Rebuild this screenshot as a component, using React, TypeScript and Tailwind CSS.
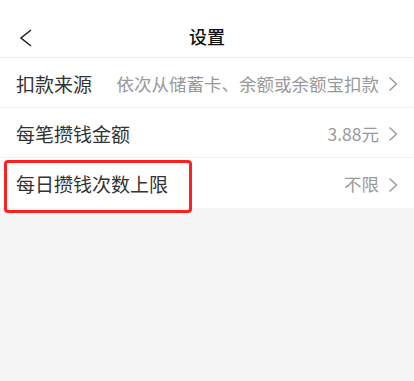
const rows = [
  { label: "扣款来源", value: "依次从储蓄卡、余额或余额宝扣款" },
  { label: "每笔攒钱金额", value: "3.88元" },
  { label: "每日攒钱次数上限", value: "不限", marked: true },
];

const ChevronRight = () => (
  <svg width="10" height="16" viewBox="0 0 10 16" fill="none" className="shrink-0">
    <polyline points="1.5,1.5 8.5,8 1.5,14.5" stroke="#9a9a9a" strokeWidth="1.4" />
  </svg>
);

export default function App() {
  return (
    <div
      className="h-[381px] w-full bg-[#f5f5f5]"
      style={{ fontFamily: '"Noto Sans CJK SC", "Noto Sans", sans-serif' }}
    >
      {/* Header */}
      <div className="relative flex h-[58px] items-center justify-center border-b border-[#ececec] bg-white">
        <svg width="14" height="18" viewBox="0 0 14 18" fill="none" className="absolute left-[19px] top-[29px]">
          <polyline points="12,1 2,9 12,17" stroke="#222" strokeWidth="1.6" />
        </svg>
        <span className="mt-[16px] text-[18px] font-medium text-[#111]">设置</span>
      </div>

      {/* Settings list */}
      <div className="bg-white">
        {rows.map((row, i) => (
          <div
            key={row.label}
            className={`relative flex h-[50px] items-center justify-between pl-[16px] pr-[16px] pt-[3px] ${
              i < rows.length - 1 ? "border-b border-[#efefef]" : ""
            }`}
          >
            <span className="text-[19px] text-[#333]">{row.label}</span>
            <div className="flex items-center gap-[9px]">
              <span className="text-[17.5px] text-[#999]">{row.value}</span>
              <ChevronRight />
            </div>
            {row.marked && (
              <div className="absolute left-[4px] top-[2px] h-[53px] w-[188px] rounded-[4px] border-[3px] border-[#ff1f1f]" />
            )}
          </div>
        ))}
      </div>
    </div>
  );
}
